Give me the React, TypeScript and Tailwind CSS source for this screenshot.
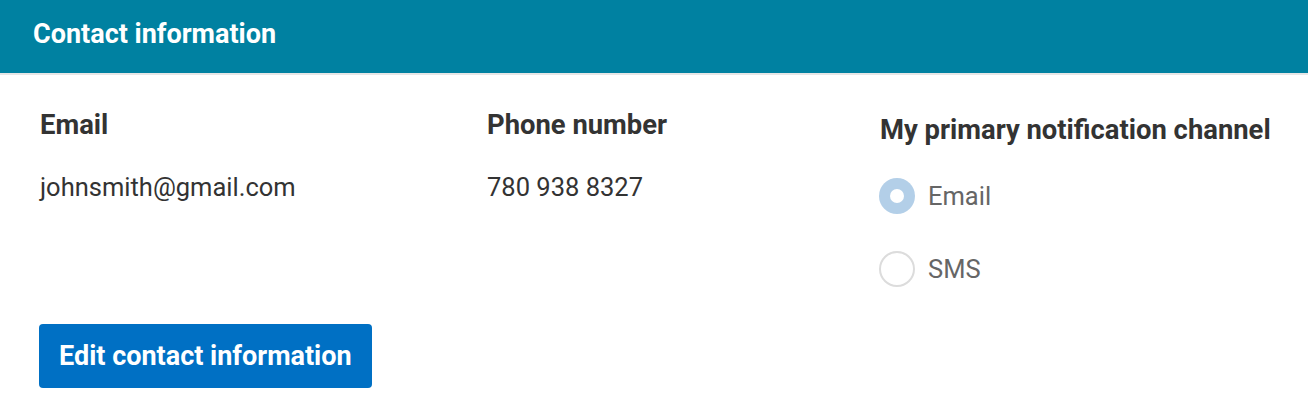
import React from "react";

export default function App() {
  return (
    <div className="w-[1308px] h-[420px] bg-white font-['Roboto',sans-serif] text-[#333]">
      <div className="h-[75px] bg-[#0081a1] border-b-2 border-[#e6e6e6] flex items-center pl-[33px]">
        <h2 className="text-[27px] font-bold text-white leading-none pb-[5px]">Contact information</h2>
      </div>
      <div className="pl-[40px] pr-[20px] pt-[34px]">
        <div className="grid grid-cols-[447px_393px_1fr]">
          <div className="flex flex-col">
            <div className="text-[27.4px] font-bold leading-[32px] text-[#333]">Email</div>
            <div className="text-[25.5px] leading-[32px] mt-[30px] text-[#333]">johnsmith@gmail.com</div>
          </div>
          <div className="flex flex-col">
            <div className="text-[27.4px] font-bold leading-[32px] text-[#333]">Phone number</div>
            <div className="text-[25.5px] leading-[32px] mt-[30px] text-[#333]">780 938 8327</div>
          </div>
          <div className="flex flex-col pt-[5px]">
            <div className="text-[27.4px] font-bold leading-[32px] text-[#333] whitespace-nowrap">My primary notification channel</div>
            <div className="flex flex-col gap-[37px] mt-[32px] -ml-[1px]">
              <label className="flex items-center gap-[13px]">
                <span className="w-[36px] h-[36px] rounded-full bg-[#b3cfe8] flex items-center justify-center">
                  <span className="w-[14px] h-[14px] rounded-full bg-white" />
                </span>
                <span className="text-[25.5px] leading-[32px] text-[#666]">Email</span>
              </label>
              <label className="flex items-center gap-[13px]">
                <span className="w-[36px] h-[36px] rounded-full border-2 border-[#dcdcdc] bg-white" />
                <span className="text-[25.5px] leading-[32px] text-[#666]">SMS</span>
              </label>
            </div>
          </div>
        </div>
        <button className="mt-[37px] -ml-[1px] h-[64px] px-[20px] rounded-[4px] bg-[#0070c4] text-white text-[27px] font-bold leading-none">
          Edit contact information
        </button>
      </div>
    </div>
  );
}
